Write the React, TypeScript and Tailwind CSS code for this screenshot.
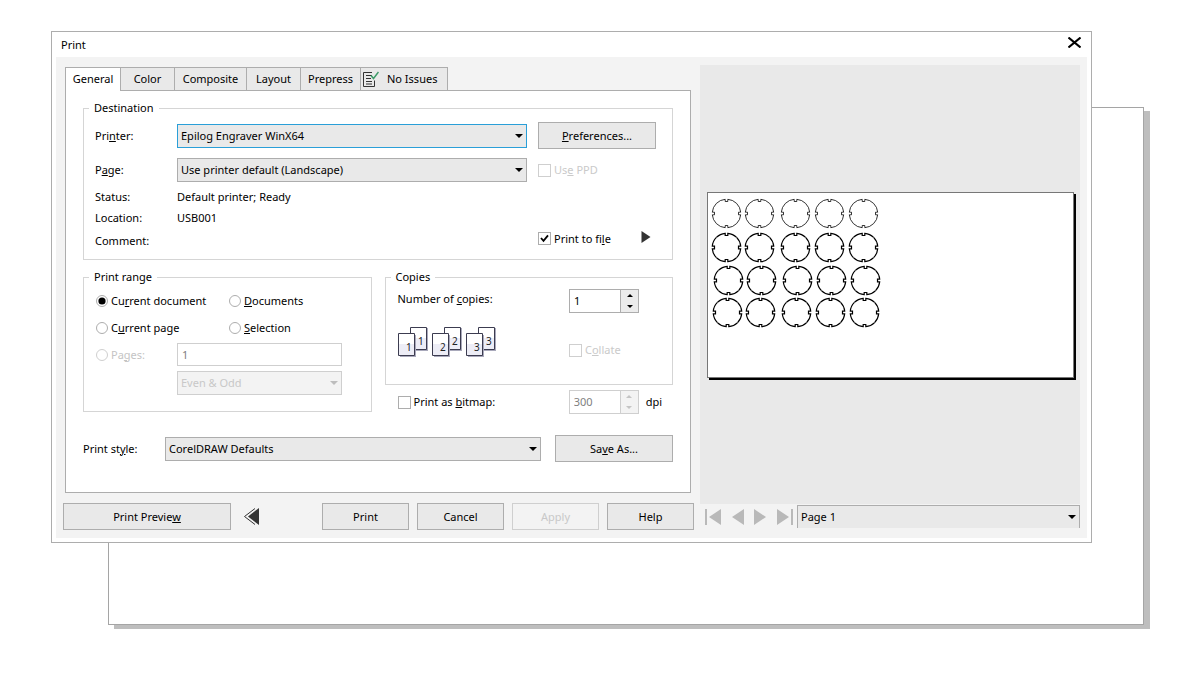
import React from 'react';

const tabs = [
    { title: 'Color', width: 'w-[54px]' },
    { title: 'Composite', width: 'w-[72px]' },
    { title: 'Layout', width: 'w-[54px]' },
    { title: 'Prepress', width: 'w-[60px]' },
];

const discRows = [
    { y: 21, xs: [19, 52, 88, 122, 156], stroke: 0.8 },
    { y: 55, xs: [19, 52, 88, 122, 156], stroke: 1.2 },
    { y: 88, xs: [21, 54, 90, 124, 158], stroke: 1.2 },
    { y: 120, xs: [20, 53, 89, 123, 157], stroke: 1.2 },
];

const pushButton = 'h-[27px] shrink-0 border border-[#adadad] bg-[#e9e9e9] text-center disabled:border-[#cfcfcf] disabled:bg-[#f3f3f3] disabled:text-[#c8c8c8]';

function DropDown({ id, label, value, className = '', border = 'border border-[#adadad]', disabled = false }: {
    id: string; label?: string; value: string; className?: string; border?: string; disabled?: boolean;
}) {
    return (
        <div className={`relative ${className}`}>
            <select
                id={id}
                aria-label={label}
                disabled={disabled}
                className={`h-full w-full appearance-none pl-[3px] pr-5 opacity-100 outline-none ${border} ${disabled ? 'bg-[#f3f3f3] text-[#c8c8c8]' : 'bg-[#e9e9e9]'}`}
            >
                <option>{value}</option>
            </select>
            <svg className={`pointer-events-none absolute right-1 top-[10px] ${disabled ? 'fill-[#bdbdbd]' : 'fill-black'}`} width="8" height="4" viewBox="0 0 8 4">
                <path d="M0 0h8L4 4z" />
            </svg>
        </div>
    );
}

function CheckBox({ children, checked = false, disabled = false }: { children: React.ReactNode; checked?: boolean; disabled?: boolean }) {
    return (
        <label className={`flex items-center gap-[3px] ${disabled ? 'text-[#cacaca]' : ''}`}>
            <span className="grid">
                <input
                    type="checkbox"
                    defaultChecked={checked}
                    disabled={disabled}
                    className={`peer col-start-1 row-start-1 size-[13px] appearance-none border bg-white ${disabled ? 'border-[#cfcfcf]' : 'border-[#adadad]'}`}
                />
                <svg className="pointer-events-none invisible col-start-1 row-start-1 size-[13px] peer-checked:visible" viewBox="0 0 13 13" fill="none" stroke="#000" strokeWidth="1.8">
                    <path d="M3 6l2.500 2.800L10 3.400" />
                </svg>
            </span>
            <span>{children}</span>
        </label>
    );
}

function Radio({ children, checked = false, disabled = false }: { children: React.ReactNode; checked?: boolean; disabled?: boolean }) {
    return (
        <label className={`flex items-center gap-[3px] ${disabled ? 'text-[#c4c4c4]' : ''}`}>
            <span className="grid">
                <input
                    type="radio"
                    name="range"
                    defaultChecked={checked}
                    disabled={disabled}
                    className={`peer col-start-1 row-start-1 size-3 appearance-none rounded-full border bg-white ${disabled ? 'border-[#cfcfcf]' : 'border-[#adadad]'}`}
                />
                <svg className="pointer-events-none invisible col-start-1 row-start-1 size-3 peer-checked:visible" viewBox="0 0 12 12">
                    <circle cx="6" cy="6" r="3.600" />
                </svg>
            </span>
            <span>{children}</span>
        </label>
    );
}

function Spinner({ id, label, value, disabled = false }: { id: string; label?: string; value: string; disabled?: boolean }) {
    const line = disabled ? 'border-[#cfcfcf]' : 'border-[#adadad]';
    const fill = disabled ? 'fill-[#c4c4c4]' : 'fill-black';
    return (
        <div className={`flex h-6 w-[70px] border ${line}`}>
            <input id={id} aria-label={label} defaultValue={value} disabled={disabled} className="w-[50px] bg-white pl-1 outline-none disabled:text-[#808080]" />
            <div className={`flex flex-1 flex-col border-l ${line} ${disabled ? 'bg-[#f3f3f3]' : 'bg-[#ececec]'}`}>
                <button disabled={disabled} aria-label="Increase" className="flex flex-1 items-center justify-center">
                    <svg className={fill} width="6" height="3" viewBox="0 0 6 3"><path d="M0 3h6L3 0z" /></svg>
                </button>
                <button disabled={disabled} aria-label="Decrease" className="flex flex-1 items-center justify-center">
                    <svg className={fill} width="6" height="3" viewBox="0 0 6 3"><path d="M0 0h6L3 3z" /></svg>
                </button>
            </div>
        </div>
    );
}

function Group({ title, className = '', children }: { title: string; className?: string; children: React.ReactNode }) {
    return (
        <fieldset className="min-w-0 border border-[#d5d5d5]">
            <legend className="ml-[5px] px-[5px] leading-4">{title}</legend>
            <div className={className}>{children}</div>
        </fieldset>
    );
}

function CopyStack({ n }: { n: number }) {
    return (
        <svg width="30" height="30" viewBox="0 0 30 30" fontSize="10" fontFamily="'Noto Sans', sans-serif" fill="#222">
            <path d="M14 1h16v23H14z" fill="#a9a9bb" />
            <path d="M12.500.5h16v22h-16z" fill="#fff" stroke="#3c3c50" />
            <path d="M13 11h15v11H13z" fill="#ededf6" />
            <text x="20" y="18">{n}</text>
            <path d="M2 8h16v22H2z" fill="#a9a9bb" />
            <path d="M.5 6.500h16v22H.5z" fill="#fff" stroke="#3c3c50" />
            <path d="M1 17h15v11H1z" fill="#ededf6" />
            <text x="8" y="24">{n}</text>
        </svg>
    );
}

function Destination() {
    return (
        <Group title="Destination" className="pb-1.5 pl-[11px] pr-4 pt-1.5">
            <div className="flex h-[27px] items-center">
                <label htmlFor="printer" className="w-[82px]">Pri<u>n</u>ter:</label>
                <DropDown id="printer" value="Epilog Engraver WinX64" className="h-6 flex-1" border="border border-[#2a9fd8]" />
                <button className={`${pushButton} ml-[11px] w-[118px]`}><u>P</u>references...</button>
            </div>
            <div className="mt-[9px] flex h-6 items-center">
                <label htmlFor="page" className="w-[82px]">P<u>a</u>ge:</label>
                <DropDown id="page" value="Use printer default (Landscape)" className="h-6 flex-1" />
                <div className="ml-[11px] w-[118px]">
                    <CheckBox disabled>Us<u>e</u> PPD</CheckBox>
                </div>
            </div>
            <div className="mt-1 flex h-[21px] items-center">
                <span className="w-[82px]">Status:</span>
                <span>Default printer; Ready</span>
            </div>
            <div className="flex h-[21px] items-center">
                <span className="w-[82px]">Location:</span>
                <span>USB001</span>
            </div>
            <div className="flex h-[25px] items-center justify-between">
                <span>Comment:</span>
                <div className="mb-1 flex w-[118px] items-center justify-between pr-[5px]">
                    <CheckBox checked>Print to fi<u>l</u>e</CheckBox>
                    <button aria-label="Print to file options" className="mb-1">
                        <svg width="10" height="12" viewBox="0 0 10 12" fill="#333"><path d="M.5 0v12L9.500 6z" /></svg>
                    </button>
                </div>
            </div>
        </Group>
    );
}

function PrintRange() {
    return (
        <Group title="Print range" className="pb-4 pl-3 pt-0.5">
            <div className="grid auto-rows-[27px] grid-cols-[133px_1fr] items-center">
                <Radio checked>Cu<u>r</u>rent document</Radio>
                <Radio><u>D</u>ocuments</Radio>
                <Radio>C<u>u</u>rrent page</Radio>
                <Radio><u>S</u>election</Radio>
            </div>
            <div className="grid grid-cols-[81px_165px] items-center gap-y-[5px] pt-0.5">
                <Radio disabled>Pa<u>g</u>es:</Radio>
                <input aria-label="Pages" defaultValue="1" disabled className="h-[23px] border border-[#cfcfcf] bg-white pl-1 text-[#808080]" />
                <DropDown id="parity" label="Even and odd pages" value="Even &amp; Odd" className="col-start-2 h-6" border="border border-[#cfcfcf]" disabled />
            </div>
        </Group>
    );
}

function Copies() {
    return (
        <div>
            <Group title="Copies" className="h-[99px] pl-3 pr-[33px] pt-1">
                <div className="flex h-6 items-start justify-between">
                    <label htmlFor="copies" className="pt-0.5">Number of <u>c</u>opies:</label>
                    <Spinner id="copies" value="1" />
                </div>
                <div className="mt-[14px] flex justify-between">
                    <div className="flex gap-1">
                        <CopyStack n={1} />
                        <CopyStack n={2} />
                        <CopyStack n={3} />
                    </div>
                    <div className="w-[70px] pt-[15px]">
                        <CheckBox disabled>C<u>o</u>llate</CheckBox>
                    </div>
                </div>
            </Group>
            <div className="mt-[5px] flex h-6 items-center pl-[13px] pr-[11px]">
                <CheckBox>Print as <u>b</u>itmap:</CheckBox>
                <div className="ml-auto flex items-center gap-[7px]">
                    <Spinner id="dpi" label="Bitmap resolution" value="300" disabled />
                    <label htmlFor="dpi">dpi</label>
                </div>
            </div>
        </div>
    );
}

function PreviewPage() {
    return (
        <div className="border border-[#777] bg-white pb-[46px] shadow-[2px_2px_0_#000]">
            <svg width="180" height="138" viewBox="0 0 180 138" fill="none" stroke="#000">
                {discRows.map((row) =>
                    row.xs.map((x) => (
                        <g key={`${x}-${row.y}`} transform={`translate(${x - 0.5} ${row.y - 0.5})`} strokeWidth={row.stroke}>
                            {[0, 90, 180, 270].map((angle) => (
                                <path key={angle} transform={`rotate(${angle})`} d="M-10.100-10.100A14.300 14.300 0 0 1-1.300-14.200V-12H1.300V-14.200A14.300 14.300 0 0 1 10.100-10.100" />
                            ))}
                        </g>
                    ))
                )}
            </svg>
        </div>
    );
}

function Preview() {
    return (
        <div className="flex min-w-0 flex-1 flex-col pt-2">
            <div className="flex flex-1 flex-col justify-center bg-[#e9e9e9] pl-[7px] pr-1.5">
                <PreviewPage />
            </div>
            <div className="mb-2.5 mt-px flex h-[23px]">
                <div className="flex w-[97px] items-center justify-between pl-[5px] pr-1 text-[#b9b9b9]">
                    <button disabled aria-label="First page">
                        <svg width="16" height="16" viewBox="0 0 16 16" fill="currentColor"><path d="M0 0h2v16H0zM16 0v16L4 8z" /></svg>
                    </button>
                    <button disabled aria-label="Previous page">
                        <svg width="12" height="16" viewBox="0 0 12 16" fill="currentColor"><path d="M12 0v16L0 8z" /></svg>
                    </button>
                    <button disabled aria-label="Next page">
                        <svg width="12" height="16" viewBox="0 0 12 16" fill="currentColor"><path d="M0 0v16l12-8z" /></svg>
                    </button>
                    <button disabled aria-label="Last page">
                        <svg width="16" height="16" viewBox="0 0 16 16" fill="currentColor"><path d="M0 0v16l12-8zM14 0h2v16h-2z" /></svg>
                    </button>
                </div>
                <DropDown id="preview-page" label="Preview page" value="Page 1" className="flex-1" border="border border-b-0 border-[#adadad]" />
            </div>
        </div>
    );
}

function PrintDialog() {
    return (
        <div role="dialog" aria-label="Print" className="border border-[#adadad] bg-white px-1 pb-1">
            <div className="flex h-[25px] items-center justify-between pl-[5px] pr-1.5">
                <h1>Print</h1>
                <button aria-label="Close" className="mb-1">
                    <svg width="13" height="11" viewBox="0 0 13 11" stroke="#000" strokeWidth="2"><path d="M.5.5l12 10M12.500.5l-12 10" /></svg>
                </button>
            </div>
            <div className="flex gap-1.5 bg-[#f3f3f3] px-[7px]">
                <div className="w-[631px] shrink-0 pb-2 pt-2.5">
                    <div className="pl-0.5 pr-[3px]">
                        <div role="tablist" className="flex h-[23px]">
                            <button role="tab" aria-selected="true" className="z-10 -mb-px w-14 border-x border-t border-[#adadad] bg-white pb-0.5">General</button>
                            {tabs.map((tab) => (
                                <button key={tab.title} role="tab" className={`border-r border-t border-[#adadad] bg-[#e9e9e9] ${tab.width}`}>{tab.title}</button>
                            ))}
                            <button role="tab" className="flex w-[87px] items-center gap-2 border-r border-t border-[#adadad] bg-[#e9e9e9] pl-0.5">
                                <svg width="16" height="17" viewBox="0 0 16 17" fill="none">
                                    <path d="M9 1.500H.5v14h11v-6M3 4.500h6M3 7.500h5M3 10.500h6M3 13h6" stroke="#333" />
                                    <path d="M8 4.500l2.500 3L15.500 1" stroke="#3d9b68" strokeWidth="1.500" />
                                </svg>
                                No Issues
                            </button>
                        </div>
                        <div className="border border-[#adadad] bg-white px-[17px] pb-[30px] pt-[9px]">
                            <Destination />
                            <div className="mt-[9px] grid grid-cols-2 items-start gap-[13px]">
                                <PrintRange />
                                <Copies />
                            </div>
                            <div className="mt-[21px] flex items-center">
                                <label htmlFor="style" className="w-[82px]">Print st<u>y</u>le:</label>
                                <DropDown id="style" value="CorelDRAW Defaults" className="mr-[14px] h-6 flex-1" />
                                <button className={`${pushButton} w-[118px]`}>Sa<u>v</u>e As...</button>
                            </div>
                        </div>
                    </div>
                    <div className="mt-2.5 flex items-center">
                        <button className={`${pushButton} w-[168px]`}>Print Previe<u>w</u></button>
                        <button aria-label="Hide preview" className="ml-3">
                            <svg width="17" height="17" viewBox="0 0 17 17"><path d="M16 0v17L5 8.500z" fill="#333" /><path d="M12 .5L1.500 8.500l10.500 8" fill="none" stroke="#333" /></svg>
                        </button>
                        <div className="ml-auto flex gap-2">
                            <button className={`${pushButton} w-[87px]`}>Print</button>
                            <button className={`${pushButton} w-[87px]`}>Cancel</button>
                            <button disabled className={`${pushButton} w-[87px]`}>Apply</button>
                            <button className={`${pushButton} w-[87px]`}>Help</button>
                        </div>
                    </div>
                </div>
                <Preview />
            </div>
        </div>
    );
}

export default function App() {
    return (
        <div className="min-h-screen bg-white font-['Noto_Sans','Open_Sans',sans-serif] text-[11px] leading-4 text-black">
            <main className="grid grid-cols-1 pb-16 pl-[51px] pr-[39px] pt-[31px]">
                <div className="col-start-1 row-start-1 ml-[57px] mt-[76px] border border-[#a5a5a5] bg-white shadow-[6px_4px_0_#bebebe]" />
                <div className="z-10 col-start-1 row-start-1 mb-[82px] mr-[52px]">
                    <PrintDialog />
                </div>
            </main>
        </div>
    );
}
